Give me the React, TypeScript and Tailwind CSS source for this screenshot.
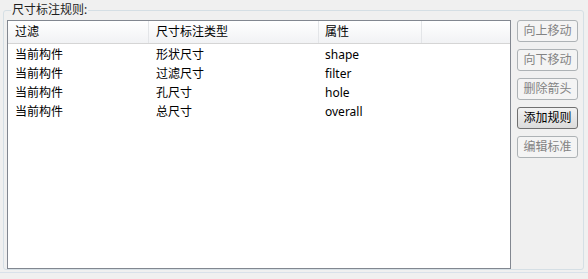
import React from "react";

const rows = [
  ["当前构件", "形状尺寸", "shape"],
  ["当前构件", "过滤尺寸", "filter"],
  ["当前构件", "孔尺寸", "hole"],
  ["当前构件", "总尺寸", "overall"],
];

const font = { fontFamily: '"Noto Sans", "Noto Sans CJK SC", sans-serif' };

function Btn({ label, enabled }: { label: string; enabled?: boolean }) {
  return (
    <div
      className={
        "h-[22px] w-[61px] rounded-[3px] border flex items-center justify-center text-[12px] leading-none " +
        (enabled
          ? "border-[#707070] bg-gradient-to-b from-[#f2f2f2] to-[#dcdcdc] text-[#000]"
          : "border-[#adb2b5] bg-[#f4f4f4] text-[#838383]")
      }
    >
      {label}
    </div>
  );
}

export default function App() {
  return (
    <div className="w-[588px] h-[279px] bg-[#f0f0f0] flex flex-col" style={font}>
      <div className="pt-[10px] pl-[3px] pr-[4px]">
        <div className="relative h-[260px] border border-[#d5dfe5] rounded-[3px] flex pt-[9px] pl-[3px]">
          <div className="absolute left-[7px] top-[-9px] px-[1px] bg-[#f0f0f0] text-[12px] leading-[16px] text-[#1e1e1e]">
            尺寸标注规则:
          </div>
          <div className="w-[504px] h-[249px] border border-[#828790] bg-white flex flex-col">
            <div className="h-[23px] flex border-b border-[#d5d5d5] bg-gradient-to-b from-[#ffffff] to-[#f1f2f4] text-[12px] text-[#000]">
              <div className="w-[141px] border-r border-[#e3e5e8] pl-[7px] flex items-center">过滤</div>
              <div className="w-[170px] border-r border-[#e3e5e8] pl-[7px] flex items-center">尺寸标注类型</div>
              <div className="w-[103px] border-r border-[#e3e5e8] pl-[6px] flex items-center">属性</div>
              <div className="flex-1" />
            </div>
            <div className="pt-[1px]">
              {rows.map((r, i) => (
                <div key={i} className="h-[19px] flex items-center text-[12px] text-[#000]">
                  <div className="w-[141px] pl-[7px]">{r[0]}</div>
                  <div className="w-[170px] pl-[7px]">{r[1]}</div>
                  <div className="w-[103px] pl-[6px]">{r[2]}</div>
                </div>
              ))}
            </div>
          </div>
          <div className="ml-[6px] flex flex-col gap-[7px]">
            <Btn label="向上移动" />
            <Btn label="向下移动" />
            <Btn label="删除箭头" />
            <Btn label="添加规则" enabled />
            <Btn label="编辑标准" />
          </div>
        </div>
      </div>
      <div className="mt-[2px] h-[1px] bg-[#d9e1ea]" />
    </div>
  );
}
